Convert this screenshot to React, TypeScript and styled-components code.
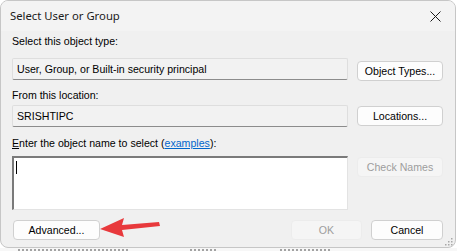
import React from 'react';
import styled, { createGlobalStyle } from 'styled-components';

const GlobalStyle = createGlobalStyle`
  html, body {
    margin: 0;
    padding: 0;
    background: #ffffff;
  }
  body {
    width: 457px;
    height: 251px;
    overflow: hidden;
  }
`;

export default function App() {
  return (
    <>
      <GlobalStyle />
      <Page>
        <Window>
          <TitleBar>
            <Title>Select User or Group</Title>
            <CloseButton>
              <svg width="11" height="11" viewBox="0 0 11 11">
                <path d="M0.5 0.5 L10.5 10.5 M10.5 0.5 L0.5 10.5" stroke="#1a1a1a" strokeWidth="1" />
              </svg>
            </CloseButton>
          </TitleBar>

          <Body>
            <Label $top={4}>Select this object type:</Label>
            <Row $top={10}>
              <ReadOnlyField>User, Group, or Built-in security principal</ReadOnlyField>
              <DialogButton $width={86} $offset={3}>Object Types...</DialogButton>
            </Row>

            <Label $top={8}>From this location:</Label>
            <Row $top={3}>
              <ReadOnlyField>SRISHTIPC</ReadOnlyField>
              <DialogButton $width={86} $offset={1}>Locations...</DialogButton>
            </Row>

            <Label $top={10}>
              <u>E</u>nter the object name to select (<Link>examples</Link>):
            </Label>
            <Row $top={6}>
              <NameBox>
                <Caret />
              </NameBox>
              <DialogButton $width={86} $offset={1} disabled>
                Check Names
              </DialogButton>
            </Row>

            <Footer>
              <DialogButton $width={87}>Advanced...</DialogButton>
              <Spacer />
              <DialogButton $width={71} disabled>
                OK
              </DialogButton>
              <DialogButton $width={72}>Cancel</DialogButton>
            </Footer>
          </Body>

          <Grip>
            <svg width="8" height="8" viewBox="0 0 8 8">
              <rect x="6" y="0" width="1.5" height="1.5" fill="#a8a8a8" />
              <rect x="3" y="3" width="1.5" height="1.5" fill="#a8a8a8" />
              <rect x="6" y="3" width="1.5" height="1.5" fill="#a8a8a8" />
              <rect x="0" y="6" width="1.5" height="1.5" fill="#a8a8a8" />
              <rect x="3" y="6" width="1.5" height="1.5" fill="#a8a8a8" />
              <rect x="6" y="6" width="1.5" height="1.5" fill="#a8a8a8" />
            </svg>
          </Grip>
        </Window>

        <Behind>
          <Smudge $width={110} />
          <Smudge $width={28} />
          <Smudge $width={50} />
        </Behind>

        <Arrow width="70" height="22" viewBox="0 0 70 22">
          <path d="M1 12 L25 1 L23 8 L60 5 L61 9 L23 13 L25 20 Z" fill="#e8393c" />
        </Arrow>
      </Page>
    </>
  );
}

const Page = styled.div`
  position: relative;
  width: 457px;
  height: 251px;
  overflow: hidden;
  font-family: 'Liberation Sans', Arial, sans-serif;
`;

const Window = styled.div`
  position: relative;
  width: 454px;
  height: 246px;
  border: 1px solid #c6c6c6;
  border-radius: 8px;
  background: #f0f0f0;
  overflow: hidden;
  display: flex;
  flex-direction: column;
`;

const TitleBar = styled.div`
  height: 30px;
  flex: none;
  display: flex;
  align-items: center;
  justify-content: space-between;
  background: #f3f3f3;
  padding: 0 9px 0 9px;
`;

const Title = styled.div`
  font-family: 'Noto Sans', 'Open Sans', sans-serif;
  font-size: 11.3px;
  color: #1b1b1b;
  margin-top: -1px;
`;

const CloseButton = styled.div`
  width: 30px;
  height: 30px;
  display: flex;
  align-items: center;
  justify-content: center;
  margin-right: -4px;
  margin-top: 1px;
`;

const Body = styled.div`
  flex: 1;
  display: flex;
  flex-direction: column;
  padding: 0 12px 0 11px;
`;

const Label = styled.div<{ $top: number }>`
  margin-top: ${p => p.$top}px;
  font-size: 10.6px;
  line-height: 13px;
  color: #000;
  u {
    text-decoration: underline;
  }
`;

const Link = styled.span`
  color: #0066cc;
  text-decoration: underline;
`;

const Row = styled.div<{ $top: number }>`
  margin-top: ${p => p.$top}px;
  display: flex;
  align-items: flex-start;
  gap: 9px;
`;

const ReadOnlyField = styled.div`
  width: 336px;
  height: 22px;
  box-sizing: border-box;
  border: 1px solid #dedede;
  border-bottom-color: #8c8c8c;
  border-radius: 2px;
  background: #f2f2f2;
  padding: 0 4px;
  display: flex;
  align-items: center;
  font-size: 10.6px;
  color: #000;
`;

const NameBox = styled.div`
  position: relative;
  width: 336px;
  height: 54px;
  box-sizing: border-box;
  border: 1px solid #e3e3e3;
  border-top: 2px solid #7a7a7a;
  border-left: 2px solid #7a7a7a;
  background: #ffffff;
`;

const Caret = styled.div`
  position: absolute;
  left: 2px;
  top: 3px;
  width: 1px;
  height: 13px;
  background: #000;
`;

const DialogButton = styled.button<{ $width: number; $offset?: number }>`
  width: ${p => p.$width}px;
  height: 20px;
  margin-top: ${p => p.$offset ?? 0}px;
  box-sizing: border-box;
  border: 1px solid #d0d0d0;
  border-radius: 4px;
  background: #fdfdfd;
  font-family: 'Liberation Sans', Arial, sans-serif;
  font-size: 10.6px;
  color: #000;
  padding: 0;
  flex: none;

  &:disabled {
    background: #f5f5f5;
    border-color: #ececec;
    color: #9d9d9d;
  }
`;

const Footer = styled.div`
  margin-top: 10px;
  display: flex;
  gap: 9px;
  padding-left: 1px;
`;

const Spacer = styled.div`
  flex: 1;
`;

const Grip = styled.div`
  position: absolute;
  right: 2px;
  bottom: 1px;
  line-height: 0;
`;

const Behind = styled.div`
  height: 3px;
  display: flex;
  align-items: flex-end;
  gap: 62px;
  padding-left: 18px;
  background: #f7f7f7;
`;

const Smudge = styled.div<{ $width: number }>`
  width: ${p => p.$width}px;
  height: 2px;
  background: repeating-linear-gradient(90deg, #6a6a6a 0 2px, transparent 2px 4px);
  opacity: 0.6;
`;

const Arrow = styled.svg`
  position: absolute;
  left: 99px;
  top: 217px;
`;
